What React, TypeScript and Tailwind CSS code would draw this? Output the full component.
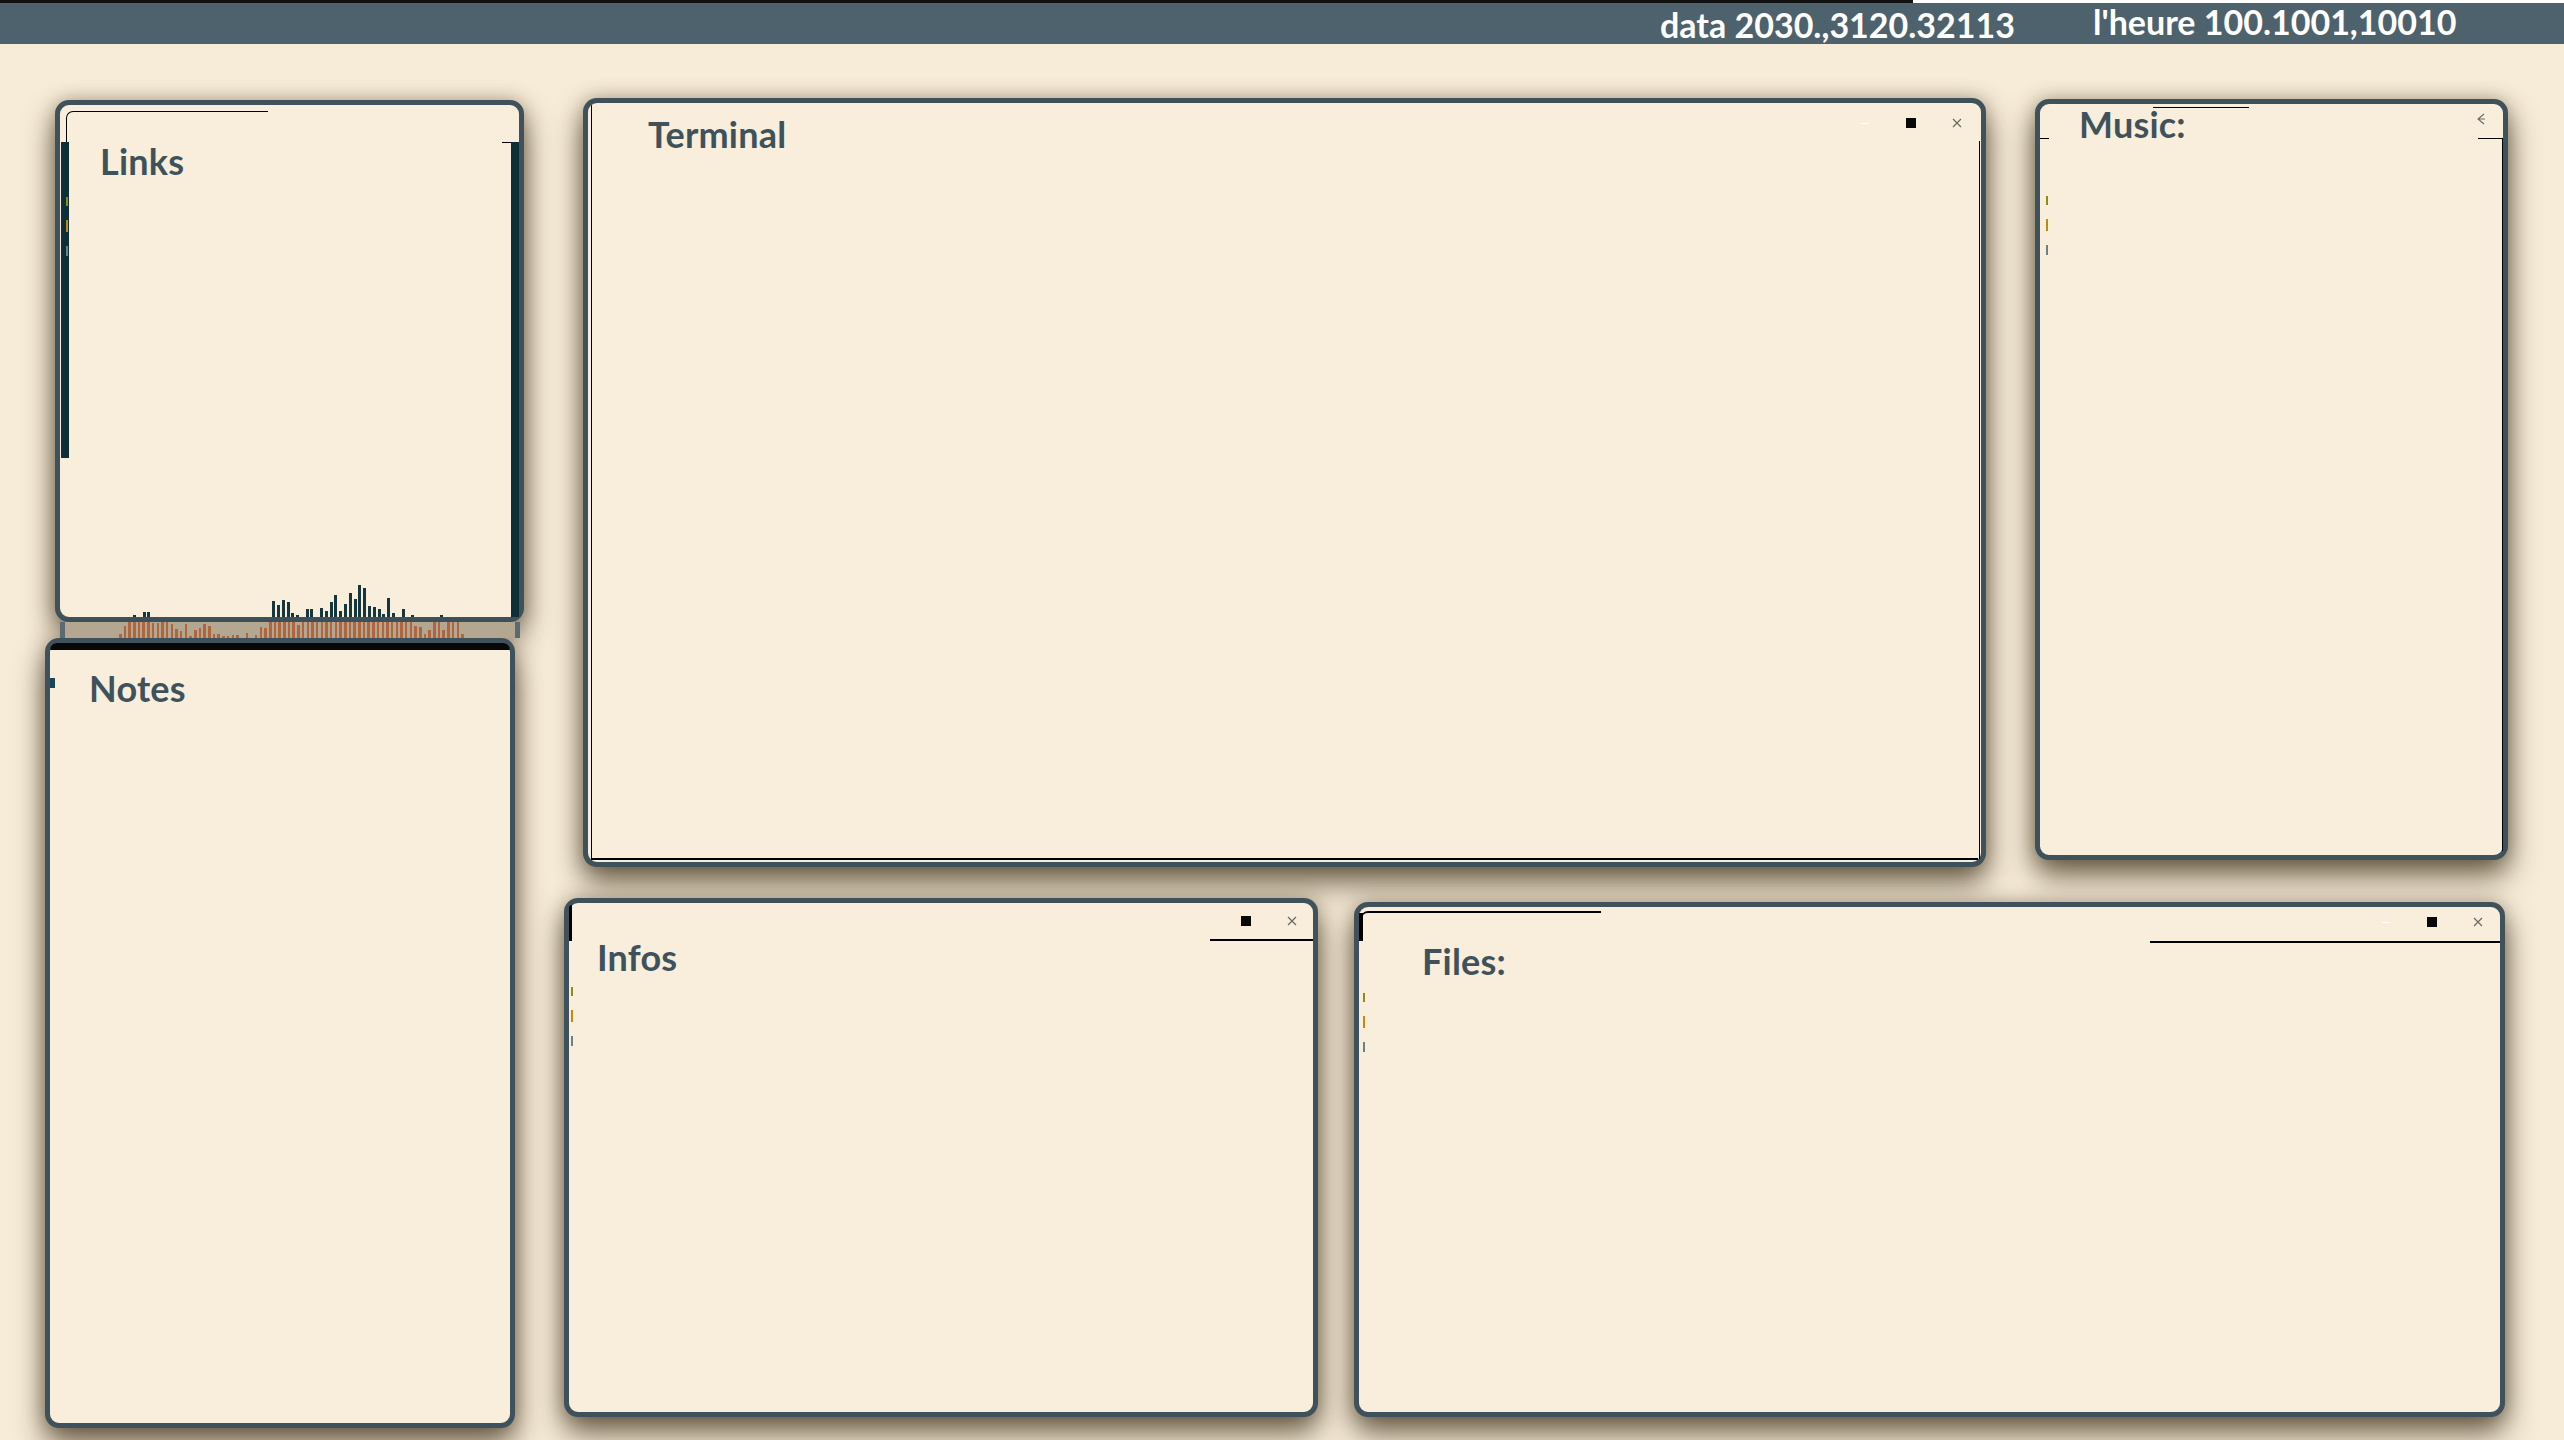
import type { ReactNode } from 'react';

const teal: Record<number, number> = {
  0: 2, 2: 5, 3: 5, 29: 16, 30: 12, 31: 17, 32: 15, 33: 4, 34: 2, 36: 8, 37: 8, 39: 9, 40: 6,
  41: 15, 42: 22, 43: 6, 44: 13, 45: 24, 46: 18, 47: 32, 48: 29, 49: 11, 50: 10, 51: 8,
  52: 3, 53: 19, 54: 4, 56: 8, 58: 2, 64: 2,
};

const orange = [
  4, 12, 16, 16, 16, 16, 16, 15, 15, 16, 16, 14, 9, 7, 14, 2, 8, 10, 14, 12, 4, 4, 2, 2, 3, 3, 0, 5,
  0, 3, 11, 10, 16, 16, 16, 16, 16, 16, 13, 16, 16, 16, 16, 16, 16, 16, 16, 16, 16, 16, 16, 16, 16,
  16, 16, 16, 16, 16, 16, 16, 16, 16, 16, 12, 11, 4, 8, 16, 16, 8, 16, 16, 16, 4,
];

function CloseIcon() {
  return (
    <svg width="10" height="10" viewBox="0 0 10 10" className="block">
      <path d="M1 1L9 9M9 1L1 9" stroke="#6a6a66" strokeWidth="1.2" fill="none" />
    </svg>
  );
}

// window buttons: faint dash, black square, thin cross
function Controls({ dash, className }: { dash?: boolean; className: string }) {
  return (
    <div className={`ml-auto flex items-center ${className}`}>
      {dash && <div className="w-[8px] h-[1px] bg-white mr-[37px]" />}
      <div className="w-[10px] h-[10px] bg-[#080808]" />
      <div className="ml-[36px]">
        <CloseIcon />
      </div>
    </div>
  );
}

// stray coloured pixels left over from a redraw
function Marks({ className }: { className: string }) {
  return (
    <div className={`absolute flex flex-col gap-[14px] ${className}`}>
      <div className="w-[2px] h-[9px] bg-[#8d8c14]" />
      <div className="w-[2px] h-[12px] bg-[#c28a12]" />
      <div className="w-[2px] h-[10px] bg-[#6f7f86]" />
    </div>
  );
}

function Win({
  title,
  className,
  titleClass,
  controls,
  children,
}: {
  title: string;
  className: string;
  titleClass: string;
  controls?: ReactNode;
  children?: ReactNode;
}) {
  return (
    <div
      className={`relative shrink-0 flex flex-col rounded-[14px] border-[5px] border-[#3f525c] bg-[#f8eedb] shadow-[0_16px_30px_rgba(52,40,18,0.7),0_0_18px_rgba(80,64,36,0.35)] ${className}`}
    >
      <div className="relative z-10 flex items-start">
        <h2 className={`font-bold text-[36px] leading-none tracking-[0.2px] text-[#3f525c] ${titleClass}`}>{title}</h2>
        {controls}
      </div>
      {children}
    </div>
  );
}

export default function App() {
  return (
    <div className="w-[2564px] h-[1440px] overflow-hidden bg-[#f7ecd8] font-['Lato',sans-serif]">
      {/* top bar */}
      <div className="relative z-20 h-[44px] bg-[#4d626d] border-t-[3px] border-[#111] flex pl-[1660px] pt-[5px] text-white font-bold text-[34px] leading-none">
        <div className="absolute -top-[3px] left-[1913px] right-0 h-[3px] bg-white" />
        <span className="w-[433px]">data 2030.,3120.32113</span>
        <span className="-mt-[3px]">l'heure 100.1001,10010</span>
      </div>

      <div className="flex">
        {/* left column */}
        <div className="w-[530px] shrink-0 flex flex-col pt-[56px]">
          <Win title="Links" className="ml-[55px] w-[469px] h-[522px]" titleClass="pt-[38px] pl-[40px]">
            <div className="absolute left-[6px] top-[6px] w-[202px] h-[32px] border-t border-l border-black rounded-tl-[7px]" />
            <div className="absolute left-[1px] top-[37px] w-[8px] h-[316px] bg-[#0e2f37]" />
            <div className="absolute right-0 top-[37px] bottom-0 w-[8px] bg-[#0e2f37]" />
            <div className="absolute right-[8px] top-[37px] w-[9px] h-[1px] bg-black" />
            <Marks className="left-[6px] top-[92px]" />
            <div className="mt-auto flex items-end gap-[1.8px] pl-[73px] h-[34px]">
              {Array.from({ length: 65 }, (_, i) => (
                <div key={i} className="w-[3px] bg-[#15363d]" style={{ height: teal[i] ?? 0 }} />
              ))}
            </div>
          </Win>
          {/* visualizer strip peeking out between the two left windows */}
          <div className="relative z-10 shrink-0 ml-[60px] w-[460px] h-[16px] bg-[#b3a792] border-x-[5px] border-[#5a6a70] flex items-end gap-[2.2px] pl-[54px]">
            {orange.map((h, i) => (
              <div key={i} className="w-[2.5px] bg-[#b0653f]" style={{ height: h }} />
            ))}
          </div>
          <Win title="Notes" className="ml-[45px] w-[470px] h-[790px]" titleClass="pt-[27px] pl-[39px]">
            <div className="absolute left-0 right-0 top-0 h-[7px] bg-[#070707] rounded-t-[9px]" />
            <div className="absolute left-0 top-[35px] w-[5px] h-[10px] bg-[#1b4550]" />
          </Win>
        </div>

        {/* right area */}
        <div className="flex-1 flex flex-col">
          <div className="flex items-start pt-[54px]">
            <Win
              title="Terminal"
              className="ml-[53px] w-[1403px] h-[769px]"
              titleClass="pt-[13px] pl-[60px]"
              controls={<Controls dash className="mr-[19px] mt-[15px]" />}
            >
              <div className="absolute left-[3px] top-[2px] bottom-[3px] w-[1px] bg-black rounded-tl-[6px]" />
              <div className="absolute left-[3px] right-[3px] bottom-[2px] h-[2px] bg-black" />
              <div className="absolute right-[1px] top-[38px] bottom-[3px] w-[1px] bg-black" />
            </Win>
            <Win
              title="Music:"
              className="ml-[49px] mt-[1px] w-[473px] h-[761px]"
              titleClass="pt-[2px] pl-[39px]"
              controls={
                <svg width="10" height="12" viewBox="0 0 10 12" className="ml-auto mr-[17px] mt-[9px]">
                  <path d="M8 1L2 6L8 11M2 6L9 6" stroke="#6a6a66" strokeWidth="1.1" fill="none" />
                </svg>
              }
            >
              <div className="absolute left-[113px] top-[3px] w-[96px] h-[1px] bg-black" />
              <div className="absolute left-0 top-[34px] w-[9px] h-[1px] bg-black" />
              <div className="absolute right-0 top-[34px] w-[25px] h-[1px] bg-black" />
              <div className="absolute right-0 top-[34px] bottom-[4px] w-[1px] bg-black" />
              <Marks className="left-[6px] top-[92px]" />
            </Win>
          </div>
          <div className="flex items-start">
            <Win
              title="Infos"
              className="ml-[34px] mt-[31px] w-[754px] h-[519px]"
              titleClass="pt-[36px] pl-[28px]"
              controls={<Controls className="mr-[16px] mt-[13px]" />}
            >
              <div className="absolute left-0 top-[2px] w-[3px] h-[36px] bg-black rounded-tl-[4px]" />
              <div className="absolute right-0 top-[36px] w-[103px] h-[1.5px] bg-black" />
              <Marks className="left-[2px] top-[84px]" />
            </Win>
            <Win
              title="Files:"
              className="ml-[36px] mt-[35px] w-[1151px] h-[515px]"
              titleClass="pt-[36px] pl-[63px]"
              controls={<Controls dash className="mr-[17px] mt-[10px]" />}
            >
              <div className="absolute left-[2px] top-[4px] w-[240px] h-[28px] border-t-2 border-l border-black rounded-tl-[7px]" />
              <div className="absolute left-0 top-[6px] w-[4px] h-[28px] bg-black" />
              <div className="absolute right-0 top-[34px] w-[350px] h-[1.5px] bg-black" />
              <Marks className="left-[4px] top-[86px]" />
            </Win>
          </div>
        </div>
      </div>
    </div>
  );
}
